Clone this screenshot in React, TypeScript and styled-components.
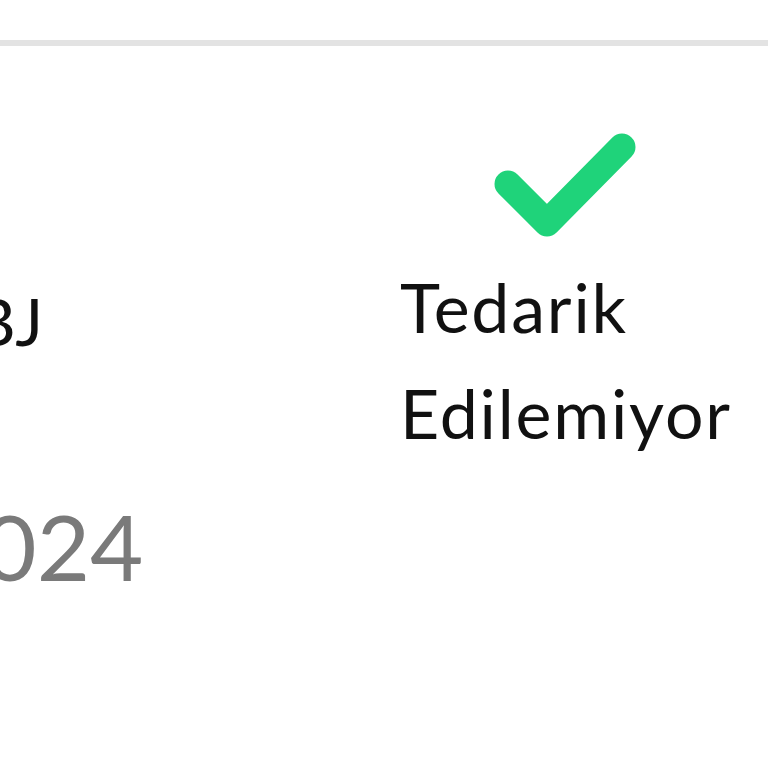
import React from "react";
import styled, { createGlobalStyle } from "styled-components";

const Global = createGlobalStyle`
  html, body { margin: 0; padding: 0; background: #ffffff; }
  body { font-family: Lato, "Noto Sans", sans-serif; }
`;

const Page = styled.div`
  width: 768px;
  height: 768px;
  overflow: hidden;
  background: #ffffff;
`;

const TopBar = styled.div`
  height: 40px;
  border-bottom: 6px solid #e3e3e3;
`;

const Row = styled.div`
  display: flex;
`;

const LeftCol = styled.div`
  width: 400px;
  overflow: hidden;
  display: flex;
  flex-direction: column;
`;

const RightCol = styled.div`
  display: flex;
  flex-direction: column;
  padding-top: 80px;
`;

const Code = styled.div`
  margin-top: 235px;
  margin-left: -27px;
  font-size: 66px;
  line-height: 80px;
  color: #111111;
  white-space: nowrap;
`;

const DateText = styled.div`
  margin-top: 135px;
  margin-left: -70px;
  font-size: 92px;
  line-height: 100px;
  color: #7a7a7a;
  white-space: nowrap;
`;

const Check = styled.svg`
  width: 150px;
  height: 118px;
  margin-left: 90px;
  display: block;
`;

const Status = styled.div`
  margin-top: 10px;
  font-size: 68px;
  line-height: 106px;
  letter-spacing: 1.8px;
  color: #111111;
`;

export default function App() {
  return (
    <Page>
      <Global />
      <TopBar />
      <Row>
        <LeftCol>
          <Code>BJ</Code>
          <DateText>2024</DateText>
        </LeftCol>
        <RightCol>
          <Check viewBox="0 0 150 118">
            <polyline
              points="18,58 57,97 132,21"
              fill="none"
              stroke="#1fd37a"
              strokeWidth="27"
              strokeLinecap="round"
              strokeLinejoin="round"
            />
          </Check>
          <Status>
            Tedarik
            <br />
            Edilemiyor
          </Status>
        </RightCol>
      </Row>
    </Page>
  );
}
